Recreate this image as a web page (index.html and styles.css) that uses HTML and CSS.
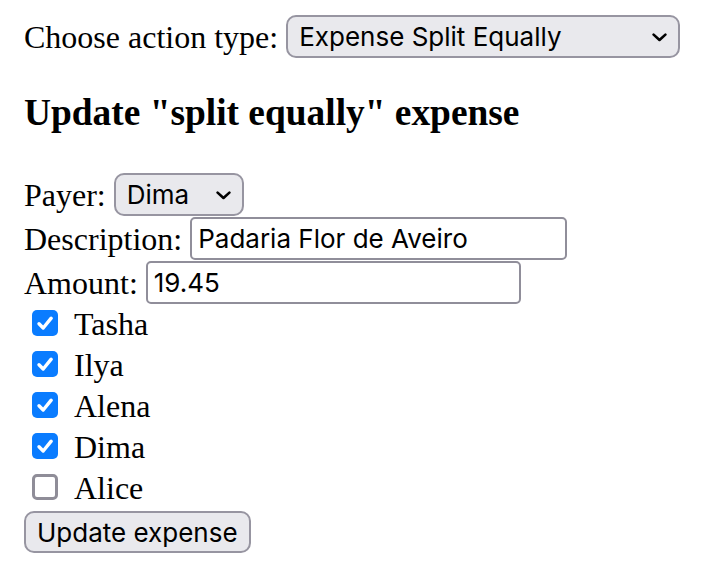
FILE: index.html
```html
<!DOCTYPE html>
<html lang="en">
<head>
<meta charset="utf-8">
<title>Update expense</title>
<link rel="stylesheet" href="styles.css">
</head>
<body>
<div class="page">
  <div class="row action">
    <label for="action">Choose action type:</label>
    <span class="select-wrap">
      <select id="action" class="select select-wide">
        <option>Expense Split Equally</option>
      </select>
      <svg class="chev" viewBox="0 0 15 9" aria-hidden="true"><path d="M1.6 1.6 L7.5 7 L13.4 1.6" fill="none" stroke="#000" stroke-width="2.6" stroke-linecap="round" stroke-linejoin="round"/></svg>
    </span>
  </div>

  <h3 class="title">Update "split equally" expense</h3>

  <div class="row field">
    <label for="payer">Payer:</label>
    <span class="select-wrap">
      <select id="payer" class="select select-small">
        <option>Dima</option>
      </select>
      <svg class="chev" viewBox="0 0 15 9" aria-hidden="true"><path d="M1.6 1.6 L7.5 7 L13.4 1.6" fill="none" stroke="#000" stroke-width="2.6" stroke-linecap="round" stroke-linejoin="round"/></svg>
    </span>
  </div>
  <div class="row field">
    <label for="desc">Description:</label>
    <input id="desc" class="text-input input-desc" type="text" value="Padaria Flor de Aveiro">
  </div>
  <div class="row field">
    <label for="amount">Amount:</label>
    <input id="amount" class="text-input input-amount" type="text" value="19.45">
  </div>

  <div class="checks">
    <label class="check"><span class="box on"><svg viewBox="0 0 26 26" aria-hidden="true"><path d="M7 13.8 L11.2 18 L19.2 8.2" fill="none" stroke="#fff" stroke-width="3.4" stroke-linecap="round" stroke-linejoin="round"/></svg></span><span class="name">Tasha</span></label>
    <label class="check"><span class="box on"><svg viewBox="0 0 26 26" aria-hidden="true"><path d="M7 13.8 L11.2 18 L19.2 8.2" fill="none" stroke="#fff" stroke-width="3.4" stroke-linecap="round" stroke-linejoin="round"/></svg></span><span class="name">Ilya</span></label>
    <label class="check"><span class="box on"><svg viewBox="0 0 26 26" aria-hidden="true"><path d="M7 13.8 L11.2 18 L19.2 8.2" fill="none" stroke="#fff" stroke-width="3.4" stroke-linecap="round" stroke-linejoin="round"/></svg></span><span class="name">Alena</span></label>
    <label class="check"><span class="box on"><svg viewBox="0 0 26 26" aria-hidden="true"><path d="M7 13.8 L11.2 18 L19.2 8.2" fill="none" stroke="#fff" stroke-width="3.4" stroke-linecap="round" stroke-linejoin="round"/></svg></span><span class="name">Dima</span></label>
    <label class="check"><span class="box off"></span><span class="name">Alice</span></label>
  </div>

  <button class="btn" type="button">Update expense</button>
</div>
</body>
</html>
```

FILE: styles.css
```css
html, body {
  margin: 0;
  padding: 0;
  background: #ffffff;
}

body {
  font-family: "Liberation Serif", "Times New Roman", serif;
  font-size: 32px;
  color: #000000;
}

.page {
  padding: 15px 0 0 24px;
}

.row {
  display: flex;
  align-items: flex-start;
  gap: 8px;
}

.row label {
  line-height: normal;
  padding-top: 4px;
}

.field {
  margin-top: 1px;
}

.select-wrap {
  position: relative;
  display: inline-flex;
}

.select {
  -webkit-appearance: none;
  appearance: none;
  box-sizing: border-box;
  height: 43px;
  margin: 0;
  padding: 0 40px 0 11px;
  font-family: Inter, "Noto Sans", sans-serif;
  font-size: 26px;
  color: #000000;
  background: #e9e9ed;
  border: 2px solid #9795a1;
  border-radius: 10px;
}

.select-wide {
  width: 394px;
}

.select-small {
  width: 130px;
}

.chev {
  position: absolute;
  right: 13px;
  top: 50%;
  width: 15px;
  height: 9px;
  margin-top: -4px;
  pointer-events: none;
}

.title {
  font-size: 37.4px;
  font-weight: bold;
  line-height: 43px;
  margin: 33px 0 39px;
}

.text-input {
  box-sizing: border-box;
  height: 43px;
  margin: 0;
  padding: 0 6px;
  font-family: Inter, "Noto Sans", sans-serif;
  font-size: 26px;
  color: #000000;
  background: #ffffff;
  border: 2px solid #908e9a;
  border-radius: 5px;
  outline: none;
}

.input-desc {
  width: 377px;
}

.input-amount {
  width: 375px;
}

.checks {
  display: flex;
  flex-direction: column;
}

.check {
  display: flex;
  align-items: flex-start;
  height: 41px;
}

.box {
  box-sizing: border-box;
  width: 26px;
  height: 26px;
  margin: 6px 16px 0 8px;
  border-radius: 5px;
  flex: none;
}

.box svg {
  display: block;
  width: 26px;
  height: 26px;
}

.box.on {
  background: #0a7cff;
}

.box.off {
  background: #ffffff;
  border: 3px solid #8f8d98;
}

.name {
  line-height: normal;
  padding-top: 2px;
}

.btn {
  box-sizing: border-box;
  height: 42px;
  margin: 2px 0 0;
  padding: 0 11px;
  font-family: Inter, "Noto Sans", sans-serif;
  font-size: 26px;
  color: #000000;
  background: #e9e9ed;
  border: 2px solid #9795a1;
  border-radius: 10px;
}
```
